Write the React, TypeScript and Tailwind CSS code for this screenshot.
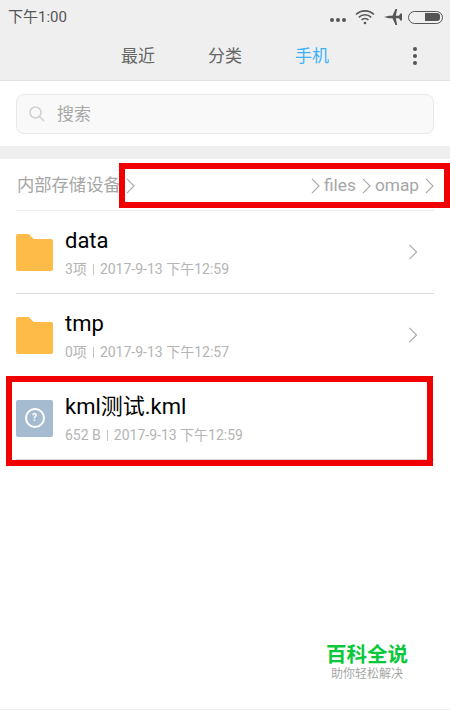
import React from 'react';

const font = "font-['Roboto','Noto_Sans_CJK_SC',sans-serif]";

const Chevron = ({ className }: { className: string }) => (
  <svg viewBox="0 0 10 18" className={className} fill="none" stroke="#a8a8a8" strokeWidth="1.250">
    <path d="M1 1l8 8-8 8" />
  </svg>
);

const Folder = () => (
  <svg width="37" height="37" viewBox="0 0 37 37" className="shrink-0">
    <path
      d="M2 0h9.500c1 0 1.600.3 2.300 1l3 3.200c.5.5 1 .7 1.800.7H35c1.200 0 2 .8 2 2V35c0 1.200-.8 2-2 2H2c-1.200 0-2-.8-2-2V2C0 .8.800 0 2 0z"
      fill="#ffbb48"
    />
  </svg>
);

const Unknown = () => (
  <div className="flex h-[37px] w-[37px] shrink-0 items-center justify-center rounded-[2px] bg-[#a5bbd0]">
    <div className="flex h-[20px] w-[20px] items-center justify-center rounded-full border-2 border-white text-[10px] font-bold leading-none text-white">
      ?
    </div>
  </div>
);

type Item = { name: string; info: string; date: string; icon: React.ReactNode; arrow?: boolean };

const items: Item[] = [
  { name: 'data', info: '3项', date: '2017-9-13 下午12:59', icon: <Folder />, arrow: true },
  { name: 'tmp', info: '0项', date: '2017-9-13 下午12:57', icon: <Folder />, arrow: true },
  { name: 'kml测试.kml', info: '652 B', date: '2017-9-13 下午12:59', icon: <Unknown /> },
];

const Row = ({ item }: { item: Item }) => (
  <div className="mx-4 flex h-[83px] items-center border-b border-[#d6d6d6]">
    {item.icon}
    <div className="ml-3 flex-1">
      <div className="text-[22px] leading-[30px] text-black">{item.name}</div>
      <div className="mt-[4px] flex items-center text-[14px] leading-[18px] text-[#b4b4b4]">
        <span>{item.info}</span>
        <span className="mx-[6px] h-[11px] w-px bg-[#c4c4c4]" />
        <span>{item.date}</span>
      </div>
    </div>
    {item.arrow && <Chevron className="mr-[16px] h-[16px] w-[10px]" />}
  </div>
);

export default function App() {
  return (
    <div className={`relative h-[711px] w-[450px] overflow-hidden bg-white ${font}`}>
      <div className="h-[81px] border-b border-[#e2e2e2] bg-[#efefef]">
        <div className="flex h-[33px] items-center justify-between pl-2 pr-[7px] pt-[1px]">
          <span className="text-[15px] text-[#555]">下午1:00</span>
          <div className="flex items-center">
            <div className="mr-[9px] mt-[5px] flex gap-[2px]">
              <span className="h-[4px] w-[4px] rounded-full bg-[#555]" />
              <span className="h-[4px] w-[4px] rounded-full bg-[#555]" />
              <span className="h-[4px] w-[4px] rounded-full bg-[#555]" />
            </div>
            <svg width="20" height="16" viewBox="0 0 20 16" fill="none" stroke="#555" strokeWidth="1.600" className="mr-[9px]">
              <path d="M1 5.500a13 13 0 0 1 18 0M3.800 8.300a9 9 0 0 1 12.400 0M6.500 11a5 5 0 0 1 7 0" />
              <circle cx="10" cy="14" r="1.300" fill="#555" stroke="none" />
            </svg>
            <svg width="18" height="16" viewBox="0 0 18 16" fill="#555" className="mr-[6px]">
              <path d="M0 8l5-1.200h3.500L11.500 0h1.700l-1.400 6.800h3.200L16.300 4.500H18V11.500h-1.700l-1.300-2.300h-3.200l1.400 6.800h-1.700L8.500 9.200H5z" />
            </svg>
            <div className="flex h-[13px] w-[35px] items-center justify-end rounded-full border border-[#555] p-[1.500px] pr-[2px]">
              <div className="h-[8px] w-[15px] rounded-r-[3px] bg-[#555]" />
            </div>
          </div>
        </div>
        <div className="relative flex h-[47px] items-center justify-center text-[17px] text-[#666]">
          <span className="mr-[53px]">最近</span>
          <span className="mr-[53px]">分类</span>
          <span className="text-[#3fb1fb]">手机</span>
          <div className="absolute right-[33px] top-[14px] flex flex-col gap-[3px]">
            <span className="h-[4px] w-[4px] rounded-full bg-[#555]" />
            <span className="h-[4px] w-[4px] rounded-full bg-[#555]" />
            <span className="h-[4px] w-[4px] rounded-full bg-[#555]" />
          </div>
        </div>
      </div>

      <div className="h-[65px] px-4 pt-[13px]">
        <div className="flex h-[40px] items-center rounded-[8px] border border-[#e8e8e8] bg-[#f9f9f9] pl-[12px]">
          <svg width="16" height="16" viewBox="0 0 16 16" fill="none" stroke="#d0d0d0" strokeWidth="1.500">
            <circle cx="6.500" cy="6.500" r="5.500" />
            <path d="M10.500 10.500L15 15" />
          </svg>
          <span className="ml-[12px] pt-[2px] text-[17px] text-[#a8a8a8]">搜索</span>
        </div>
      </div>

      <div className="h-[13px] bg-[#efefef]" />

      <div className="mx-4 flex h-[52px] items-center border-b border-[#ececec] pl-px pt-[3px] text-[17.300px] text-[#a6a6a6]">
        <span>内部存储设备</span>
        <Chevron className="ml-[5px] h-[16px] w-[9px]" />
        <div className="flex-1" />
        <Chevron className="h-[16px] w-[9px]" />
        <span className="ml-[4px]">files</span>
        <Chevron className="ml-[6px] h-[16px] w-[9px]" />
        <span className="ml-[4px]">omap</span>
        <Chevron className="ml-[6px] h-[16px] w-[9px]" />
      </div>

      {items.map((item) => (
        <Row key={item.name} item={item} />
      ))}

      <div className="absolute left-[119px] top-[163px] h-[45px] w-[331px] border-[6px] border-[#f00000]" />
      <div className="absolute left-[6px] top-[376px] h-[90px] w-[427px] border-[6px] border-[#f00000]" />

      <div className="absolute left-[326px] top-[642px] flex w-[82px] flex-col items-center">
        <span className="text-[20.500px] font-bold leading-[26px] text-[#0ac83c]">百科全说</span>
        <span className="text-[12px] leading-[13px] text-[#a6a6a6]">助你轻松解决</span>
      </div>
      <div className="absolute bottom-[1px] left-0 h-px w-full bg-[#f0f0f0]" />
    </div>
  );
}
